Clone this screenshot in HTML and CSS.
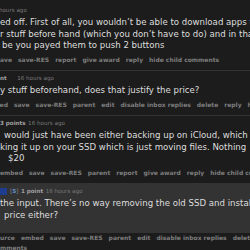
FILE: index.html
```html
<!DOCTYPE html>
<html lang="en">
<head>
<meta charset="utf-8">
<title>Comments</title>
<link rel="stylesheet" href="styles.css">
</head>
<body>
<div class="thread">

  <div class="comment">
    <div class="entry">
      <p class="tagline"><span class="time cut-time">16 hours ago</span></p>
      <div class="md">
        <p class="line">ed off. First of all, you wouldn’t be able to download apps that</p>
        <p class="line">r stuff before hand (which you don’t have to do) and in that</p>
        <p class="line in-2">be you payed them to push 2 buttons</p>
      </div>
    </div>
    <ul class="flat-list cut-save">
      <li>save</li>
      <li>save-RES</li>
      <li>report</li>
      <li>give award</li>
      <li>reply</li>
      <li>hide child comments</li>
    </ul>
  </div>

  <div class="comment">
    <div class="entry">
      <p class="tagline"><span class="score">nt</span><span class="time gap-wide">16 hours ago</span></p>
      <div class="md">
        <p class="line">y stuff beforehand, does that justify the price?</p>
      </div>
    </div>
    <ul class="flat-list cut-embed">
      <li>embed</li>
      <li>save</li>
      <li>save-RES</li>
      <li>parent</li>
      <li>edit</li>
      <li>disable inbox replies</li>
      <li>delete</li>
      <li>reply</li>
      <li>hide child comments</li>
    </ul>
  </div>

  <div class="comment">
    <div class="entry">
      <p class="tagline"><span class="score">3 points</span><span class="time">16 hours ago</span></p>
      <div class="md">
        <p class="line in-4">would just have been either backing up on iCloud, which is</p>
        <p class="line">king it up on your SSD which is just moving files. Nothing</p>
        <p class="line in-8">$20</p>
      </div>
    </div>
    <ul class="flat-list in-3">
      <li>embed</li>
      <li>save</li>
      <li>save-RES</li>
      <li>parent</li>
      <li>report</li>
      <li>give award</li>
      <li>reply</li>
      <li>hide child comments</li>
    </ul>
  </div>

  <div class="comment last">
    <div class="entry highlight">
      <p class="tagline"><span class="author"></span><span class="op">[<b>S</b>]</span><span class="score">1 point</span><span class="time">16 hours ago</span></p>
      <div class="md">
        <p class="line">the input. There’s no way removing the old SSD and installing</p>
        <p class="line in-4">price either?</p>
      </div>
    </div>
    <ul class="flat-list cut-source">
      <li>source</li>
      <li>embed</li>
      <li>save</li>
      <li>save-RES</li>
      <li>parent</li>
      <li>edit</li>
      <li>disable inbox replies</li>
      <li>delete</li>
    </ul>
    <ul class="flat-list cut-co">
      <li>comments</li>
    </ul>
  </div>

</div>
</body>
</html>
```

FILE: styles.css
```css
html, body {
  margin: 0;
  padding: 0;
}

body {
  width: 250px;
  height: 250px;
  overflow: hidden;
  background: #1c1c1c;
  font-family: "DejaVu Sans", Verdana, sans-serif;
  color: #dedede;
}

.thread {
  padding-top: 3px;
}

.comment {
  border-bottom: 1px solid #333333;
  padding-bottom: 5px;
}

.comment.last {
  border-bottom: none;
}

.entry {
  padding-top: 2px;
}

.entry.highlight {
  background: #333333;
  padding-bottom: 12px;
}

.tagline {
  margin: 0;
  height: 10px;
  line-height: 10px;
  font-size: 5.6px;
  white-space: nowrap;
  display: flex;
  align-items: center;
  gap: 2.5px;
}

.time {
  color: #7a7a7a;
}

.score {
  color: #a0a0a0;
  font-weight: bold;
}

.cut-time {
  margin-left: -10px;
}

.gap-wide {
  margin-left: 8px;
}

.author {
  width: 7px;
  height: 7px;
  background: #1f3d8f;
  margin-right: 0.5px;
}

.op {
  color: #8a8a8a;
}

.op b {
  color: #5f8fd0;
  font-weight: bold;
}

.md {
  margin-top: 2px;
}

.line {
  margin: 0;
  font-size: 8.6px;
  line-height: 11.5px;
  white-space: nowrap;
}

.in-2 { padding-left: 2px; }
.in-3 { padding-left: 3px; }
.in-4 { padding-left: 4px; }
.in-8 { padding-left: 8px; }

.flat-list {
  list-style: none;
  margin: 3.5px 0 0;
  padding: 0;
  display: flex;
  gap: 6px;
  height: 10px;
  line-height: 10px;
  font-size: 6px;
  font-weight: bold;
  color: #7c7c7c;
  white-space: nowrap;
}

.last .flat-list {
  margin-top: 0;
}

.cut-save { margin-left: -3.6px; }
.cut-embed { margin-left: -15px; }
.cut-source { margin-left: -7.7px; }
.cut-co { margin-left: -7.8px; }
```
